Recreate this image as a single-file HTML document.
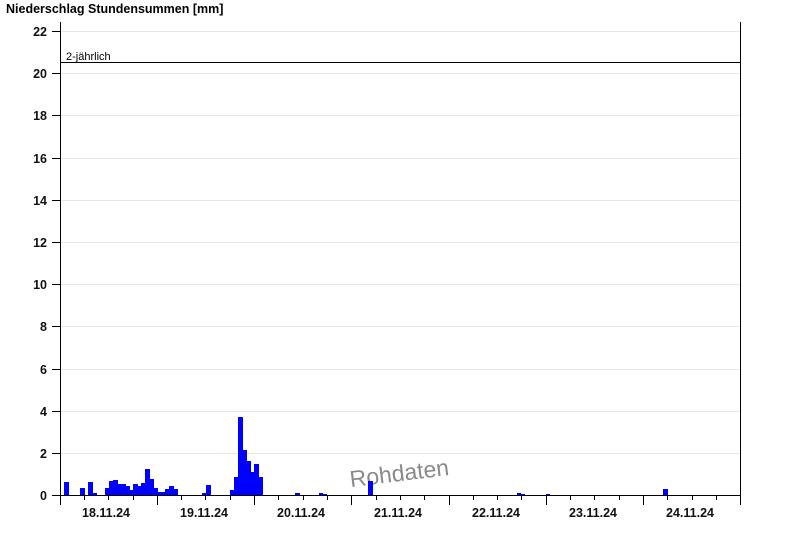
<!DOCTYPE html>
<html><head><meta charset="utf-8"><style>html,body{margin:0;padding:0;background:#fff}svg{display:block}</style></head><body>
<svg width="800" height="550" xmlns="http://www.w3.org/2000/svg" font-family="Liberation Sans, Arial, sans-serif">
<rect width="800" height="550" fill="#fff"/>
<text x="6" y="13" font-size="12.5" font-weight="bold" fill="#000">Niederschlag Stundensummen [mm]</text>
<g stroke="#e6e6e6" stroke-width="1">
<line x1="60" y1="453.5" x2="740" y2="453.5"/><line x1="60" y1="411.5" x2="740" y2="411.5"/><line x1="60" y1="369.5" x2="740" y2="369.5"/><line x1="60" y1="326.5" x2="740" y2="326.5"/><line x1="60" y1="284.5" x2="740" y2="284.5"/><line x1="60" y1="242.5" x2="740" y2="242.5"/><line x1="60" y1="200.5" x2="740" y2="200.5"/><line x1="60" y1="158.5" x2="740" y2="158.5"/><line x1="60" y1="115.5" x2="740" y2="115.5"/><line x1="60" y1="73.5" x2="740" y2="73.5"/><line x1="60" y1="31.5" x2="740" y2="31.5"/>
</g>
<g font-size="12.5" font-weight="bold" fill="#111" text-anchor="end">
<text x="47" y="500">0</text><text x="47" y="458">2</text><text x="47" y="416">4</text><text x="47" y="374">6</text><text x="47" y="331">8</text><text x="47" y="289">10</text><text x="47" y="247">12</text><text x="47" y="205">14</text><text x="47" y="163">16</text><text x="47" y="120">18</text><text x="47" y="78">20</text><text x="47" y="36">22</text>
</g>
<g stroke="#000" stroke-width="1">
<line x1="52" y1="495.5" x2="60" y2="495.5"/><line x1="52" y1="453.5" x2="60" y2="453.5"/><line x1="52" y1="411.5" x2="60" y2="411.5"/><line x1="52" y1="369.5" x2="60" y2="369.5"/><line x1="52" y1="326.5" x2="60" y2="326.5"/><line x1="52" y1="284.5" x2="60" y2="284.5"/><line x1="52" y1="242.5" x2="60" y2="242.5"/><line x1="52" y1="200.5" x2="60" y2="200.5"/><line x1="52" y1="158.5" x2="60" y2="158.5"/><line x1="52" y1="115.5" x2="60" y2="115.5"/><line x1="52" y1="73.5" x2="60" y2="73.5"/><line x1="52" y1="31.5" x2="60" y2="31.5"/>
</g>
<text x="349" y="481" font-size="23" fill="#8a8a8a" transform="rotate(-7 400 470)">Rohdaten</text>
<g fill="#0000ff">
<rect x="64" y="482" width="5" height="13"/><rect x="80" y="488" width="5" height="7"/><rect x="88" y="482" width="5" height="13"/><rect x="93" y="493" width="4" height="2"/>
<rect x="105" y="488" width="4" height="7"/><rect x="109" y="481" width="4" height="14"/><rect x="113" y="480" width="5" height="15"/><rect x="118" y="484" width="8" height="11"/><rect x="126" y="486" width="4" height="9"/><rect x="130" y="490" width="3" height="5"/><rect x="133" y="484" width="5" height="11"/><rect x="138" y="486" width="3" height="9"/><rect x="141" y="483" width="4" height="12"/><rect x="145" y="469" width="5" height="26"/><rect x="150" y="479" width="4" height="16"/><rect x="154" y="488" width="4" height="7"/><rect x="158" y="492" width="7" height="3"/><rect x="165" y="489" width="4" height="6"/><rect x="169" y="486" width="5" height="9"/><rect x="174" y="489" width="4" height="6"/>
<rect x="202" y="493" width="4" height="2"/><rect x="206" y="485" width="5" height="10"/>
<rect x="230" y="490" width="4" height="5"/><rect x="234" y="477" width="4" height="18"/><rect x="238" y="417" width="5" height="78"/><rect x="243" y="450" width="4" height="45"/><rect x="247" y="461" width="4" height="34"/><rect x="251" y="472" width="3" height="23"/><rect x="254" y="464" width="5" height="31"/><rect x="259" y="477" width="4" height="18"/>
<rect x="295" y="493" width="5" height="2"/><rect x="319" y="493" width="4" height="2"/><rect x="323" y="494" width="4" height="1"/><rect x="368" y="481" width="5" height="14"/><rect x="517" y="493" width="4" height="2"/><rect x="521" y="494" width="4" height="1"/><rect x="546" y="494" width="4" height="1"/><rect x="663" y="489" width="5" height="6"/>
</g>
<line x1="60" y1="62.5" x2="740" y2="62.5" stroke="#000"/>
<text x="66" y="60" font-size="11" fill="#000">2-jährlich</text>
<g stroke="#000" stroke-width="1">
<line x1="60.5" y1="22" x2="60.5" y2="495"/><line x1="740.5" y1="22" x2="740.5" y2="495"/><line x1="60" y1="495.5" x2="741" y2="495.5"/>
</g>
<g font-size="12.5" font-weight="bold" fill="#111" text-anchor="middle">
<text x="106" y="517">18.11.24</text><text x="204" y="517">19.11.24</text><text x="301" y="517">20.11.24</text><text x="398" y="517">21.11.24</text><text x="496" y="517">22.11.24</text><text x="593" y="517">23.11.24</text><text x="690" y="517">24.11.24</text>
</g>
<g stroke="#000">
<path d="M60.5 495v10M157.5 495v10M254.5 495v10M351.5 495v10M449.5 495v10M546.5 495v10M643.5 495v10M740.5 495v10"/>
<path d="M84.5 495v5M108.5 495v5M133.5 495v5M181.5 495v5M205.5 495v5M230.5 495v5M278.5 495v5M303.5 495v5M327.5 495v5M376.5 495v5M400.5 495v5M424.5 495v5M473.5 495v5M497.5 495v5M521.5 495v5M570.5 495v5M594.5 495v5M619.5 495v5M667.5 495v5M692.5 495v5M716.5 495v5"/>
</g>
</svg>
</body></html>
